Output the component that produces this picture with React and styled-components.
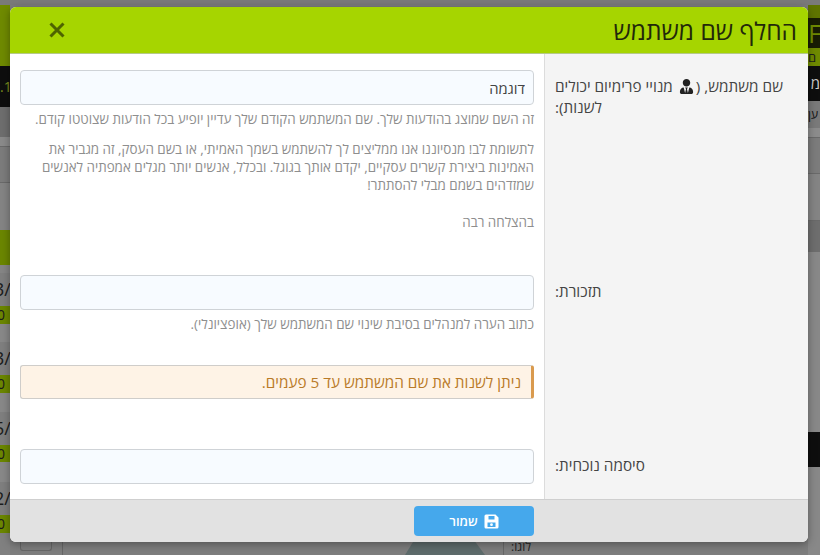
import React from "react";
import styled, { createGlobalStyle } from "styled-components";
import { FaUserTie } from "react-icons/fa";

const GlobalStyle = createGlobalStyle`
  html, body {
    margin: 0;
    padding: 0;
    height: 555px;
    overflow: hidden;
    background: #7d7d7d;
  }
  * { box-sizing: border-box; }
`;

const Page = styled.div`
  position: relative;
  width: 820px;
  height: 555px;
  overflow: hidden;
  display: flex;
  font-family: "Open Sans", "Noto Sans", "Liberation Sans", sans-serif;
`;

const SideColumn = styled.div`
  width: ${(p) => p.$width}px;
  flex: none;
  display: flex;
  flex-direction: column;
  overflow: hidden;
`;

const Center = styled.div`
  flex: 1;
  min-width: 0;
  display: flex;
  flex-direction: column;
  justify-content: space-between;
  background: #7d7d7d;
`;

const Band = styled.div`
  height: ${(p) => p.$height}px;
  flex: none;
  background: ${(p) => p.$color};
  color: ${(p) => p.$ink || "#1c1c1c"};
  font-size: ${(p) => p.$size || 18}px;
  line-height: ${(p) => p.$height}px;
  text-indent: ${(p) => p.$shift || 0}px;
  white-space: nowrap;
  overflow: hidden;
  border-bottom: ${(p) => (p.$line ? "1px solid #6a6a6a" : "none")};
  text-align: ${(p) => p.$align || "left"};
`;

const BottomStrip = styled.div`
  height: 13px;
  flex: none;
  display: flex;
  align-items: flex-start;
  padding-left: 10px;
`;

const GhostButton = styled.div`
  width: 32px;
  height: 9px;
  border: 1px solid #666;
  border-top: none;
  border-radius: 0 0 3px 3px;
`;

const GhostRule = styled.div`
  width: 1px;
  height: 13px;
  margin-left: ${(p) => p.$gap}px;
  background: #666;
`;

const GhostHexagon = styled.div`
  width: 80px;
  height: 13px;
  margin-left: 342px;
  background: #5d6b6b;
  clip-path: polygon(10% 0, 88% 0, 100% 100%, 0 100%);
`;

const GhostLabel = styled.div`
  width: 19px;
  margin-left: 8px;
  font-size: 12px;
  line-height: 9px;
  color: #222;
  direction: rtl;
  white-space: nowrap;
`;

const Overlay = styled.div`
  position: absolute;
  left: 10px;
  top: 7px;
  width: 798px;
  height: 535px;
  display: flex;
  flex-direction: column;
  background: #fff;
  border-radius: 6px;
  overflow: hidden;
  box-shadow: 0 2px 8px rgba(0, 0, 0, 0.35);
  direction: rtl;
`;

const Header = styled.header`
  height: 47px;
  flex: none;
  display: flex;
  align-items: center;
  justify-content: space-between;
  padding: 0 11px 0 39px;
  background: #a6d500;
  border-bottom: 1px solid #b5c98a;
`;

const Title = styled.h1`
  margin: 0;
  font-size: 24.5px;
  font-weight: 400;
  color: #22280a;
`;

const CloseIcon = styled.svg`
  width: 16px;
  height: 16px;
  display: block;
`;

const Body = styled.div`
  flex: 1;
  min-height: 0;
  display: flex;
  flex-direction: column;
  overflow: hidden;
`;

const Row = styled.div`
  height: ${(p) => p.$height}px;
  flex: none;
  display: flex;
`;

const LabelCell = styled.div`
  width: 264px;
  flex: none;
  padding: ${(p) => p.$top}px 23px 0 10px;
  background: #f4f4f4;
  border-left: 1px solid #dcdcdc;
  font-size: 15.3px;
  line-height: 21px;
  color: #444;
  text-align: left;
`;

const FieldCell = styled.div`
  flex: 1;
  min-width: 0;
  padding: 16px 10px 0 10px;
`;

const TextInput = styled.input`
  display: block;
  width: 100%;
  height: 35px;
  padding: 0 8px;
  border: 1px solid #cfd3d7;
  border-radius: 4px;
  background: #f7fbff;
  font: inherit;
  font-size: 14.8px;
  color: #444;
  direction: rtl;
  outline: none;
`;

const Hint = styled.p`
  margin: ${(p) => p.$top}px 0 0;
  font-size: 13.4px;
  line-height: 18px;
  color: #8e8e8e;
`;

const Alert = styled.div`
  height: 34px;
  margin-top: 32px;
  padding: 0 10px;
  display: flex;
  align-items: center;
  background: #fef3e6;
  border: 1px solid #cfcdca;
  border-right: 3px solid #d99a4e;
  border-radius: 3px;
  font-size: 15.3px;
  color: #b97a28;
`;

const Footer = styled.footer`
  height: 43px;
  flex: none;
  display: flex;
  align-items: flex-start;
  padding: 6px 274px 0 0;
  background: #e2e2e2;
  border-top: 1px solid #cfcfcf;
`;

const SaveButton = styled.button`
  width: 120px;
  height: 30px;
  display: flex;
  align-items: center;
  justify-content: center;
  gap: 6px;
  border: none;
  border-radius: 4px;
  background: #45a8ec;
  color: #fff;
  font: inherit;
  font-size: 13px;
  font-weight: 600;
`;

const SaveIcon = styled.svg`
  width: 15px;
  height: 15px;
  display: block;
`;

const PremiumIcon = styled(FaUserTie)`
  font-size: 15px;
  margin: 0 2px;
  color: #222;
  vertical-align: -2px;
`;

const leftBands = [
  { height: 5, color: "#7a7a7a" },
  { height: 61, color: "#6f8a00" },
  { height: 41, color: "#0e0e0e", ink: "#7c8f1e", text: ".1", size: 14 },
  { height: 30, color: "#6e6e6e" },
  { height: 10, color: "#8a8a8a", line: true },
  { height: 36, color: "#7c7c7c", line: true },
  { height: 47, color: "#848484" },
  { height: 35, color: "#6b8600" },
  { height: 8, color: "#858585" },
  { height: 33, color: "#7f7f7f", text: "3/", shift: -6 },
  { height: 18, color: "#6b8600", text: "0", size: 14, shift: -3 },
  { height: 18, color: "#888" },
  { height: 33, color: "#7f7f7f", text: "3/", shift: -6 },
  { height: 18, color: "#6b8600", text: "0", size: 14, shift: -3 },
  { height: 19, color: "#888" },
  { height: 33, color: "#7f7f7f", text: "5/", shift: -6 },
  { height: 17, color: "#6b8600", text: "0", size: 14, shift: -3 },
  { height: 20, color: "#888" },
  { height: 33, color: "#7f7f7f", text: "2/", shift: -6 },
  { height: 18, color: "#6b8600", text: "0", size: 14, shift: -3 },
  { height: 22, color: "#808080" },
];

const rightBands = [
  { height: 5, color: "#7a7a7a" },
  { height: 13, color: "#5f7400" },
  { height: 30, color: "#181c04", ink: "#6f8a00", text: "F", size: 26 },
  { height: 18, color: "#6f8a00", text: "ם", size: 13 },
  { height: 35, color: "#0e0e0e", ink: "#ccc", text: "מ", size: 15, align: "right" },
  { height: 27, color: "#7a7a7a", ink: "#111", text: "ען", size: 12 },
  { height: 10, color: "#8c8c8c", line: true },
  { height: 36, color: "#7c7c7c", line: true },
  { height: 47, color: "#848484", line: true },
  { height: 31, color: "#6e6e6e" },
  { height: 180, color: "#888" },
  { height: 35, color: "#0e0e0e" },
  { height: 88, color: "#888" },
];

const Strip = ({ bands, width }) => (
  <SideColumn $width={width}>
    {bands.map((b, i) => (
      <Band
        key={i}
        $height={b.height}
        $color={b.color}
        $ink={b.ink}
        $size={b.size}
        $line={b.line}
        $align={b.align}
        $shift={b.shift}
      >
        {b.text}
      </Band>
    ))}
  </SideColumn>
);

const App = () => {
  return (
    <>
      <GlobalStyle />
      <Page>
        <Strip bands={leftBands} width={10} />
        <Center>
          <Band $height={5} $color="#7a7a7a" />
          <BottomStrip>
            <GhostButton />
            <GhostRule $gap={10} />
            <GhostHexagon />
            <GhostRule $gap={18} />
            <GhostLabel>לוגו:</GhostLabel>
          </BottomStrip>
        </Center>
        <Strip bands={rightBands} width={12} />

        <Overlay dir="rtl">
          <Header>
            <Title>החלף שם משתמש</Title>
            <CloseIcon viewBox="0 0 16 16">
              <path d="M1.5 1.5 L14.5 14.5 M14.5 1.5 L1.5 14.5" stroke="#4e6400" strokeWidth="3" fill="none" />
            </CloseIcon>
          </Header>

          <Body>
            <Row $height={205}>
              <LabelCell $top={22}>
                שם משתמש, (<PremiumIcon /> מנויי פרימיום יכולים לשנות):
              </LabelCell>
              <FieldCell>
                <TextInput defaultValue="דוגמה" />
                <Hint $top={5}>זה השם שמוצג בהודעות שלך. שם המשתמש הקודם שלך עדיין יופיע בכל הודעות שצוטטו קודם.</Hint>
                <Hint $top={12}>
                  לתשומת לב! מנסיוננו אנו ממליצים לך להשתמש בשמך האמיתי, או בשם העסק, זה מגביר את האמינות ביצירת קשרים עסקיים, יקדם אותך בגוגל. ובכלל, אנשים יותר מגלים אמפתיה לאנשים שמזדהים בשמם מבלי להסתתר!
                </Hint>
                <Hint $top={19}>בהצלחה רבה</Hint>
              </FieldCell>
            </Row>

            <Row $height={174}>
              <LabelCell $top={22}>תזכורת:</LabelCell>
              <FieldCell>
                <TextInput />
                <Hint $top={5}>כתוב הערה למנהלים בסיבת שינוי שם המשתמש שלך (אופציונלי).</Hint>
                <Alert>ניתן לשנות את שם המשתמש עד 5 פעמים.</Alert>
              </FieldCell>
            </Row>

            <Row $height={66}>
              <LabelCell $top={22}>סיסמה נוכחית:</LabelCell>
              <FieldCell>
                <TextInput type="password" />
              </FieldCell>
            </Row>
          </Body>

          <Footer>
            <SaveButton>
              <SaveIcon viewBox="0 0 15 15">
                <path
                  fill="#fff"
                  fillRule="evenodd"
                  d="M2 0.5 H11.5 L14.5 3.5 V13 A1.5 1.5 0 0 1 13 14.5 H2 A1.5 1.5 0 0 1 0.5 13 V2 A1.5 1.5 0 0 1 2 0.5 Z M4.5 2 V5.5 H10.5 V2 Z M3.5 8.5 V13 H11.5 V8.5 Z"
                />
                <circle cx="7.5" cy="10.7" r="1.4" fill="#fff" />
              </SaveIcon>
              שמור
            </SaveButton>
          </Footer>
        </Overlay>
      </Page>
    </>
  );
};

export default App;
